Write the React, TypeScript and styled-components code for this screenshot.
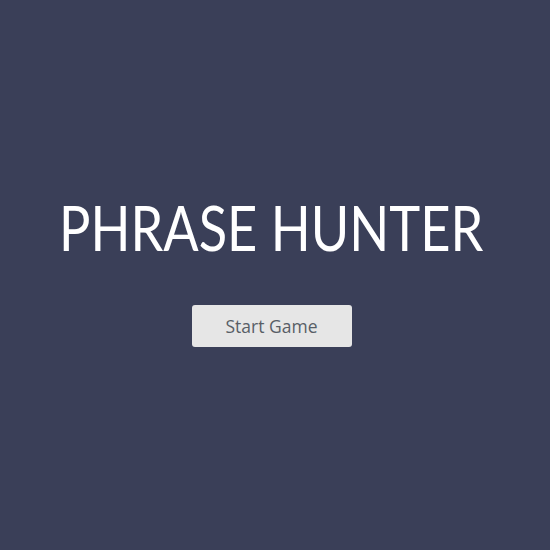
import React from "react";
import styled, { createGlobalStyle } from "styled-components";

const Global = createGlobalStyle`
  html, body { margin: 0; padding: 0; background: #3a3f58; }
`;

const Page = styled.main`
  width: 550px;
  height: 550px;
  background: #3a3f58;
  display: flex;
  flex-direction: column;
  align-items: center;
  padding: 187px 7px 0 0;
  box-sizing: border-box;
`;

const Title = styled.h1`
  margin: 0;
  font-family: "Lato", sans-serif;
  font-weight: 400;
  font-size: 62px;
  line-height: 80px;
  color: #ffffff;
  transform: scaleX(0.845);
`;

const StartButton = styled.button`
  margin-top: 38px;
  width: 160px;
  height: 42px;
  border: none;
  border-radius: 3px;
  background: #e6e6e6;
  color: #585e66;
  font-family: "Open Sans", sans-serif;
  font-size: 17.5px;
  cursor: pointer;
`;

export default function App() {
  return (
    <>
      <Global />
      <Page>
        <Title>PHRASE HUNTER</Title>
        <StartButton>Start Game</StartButton>
      </Page>
    </>
  );
}
